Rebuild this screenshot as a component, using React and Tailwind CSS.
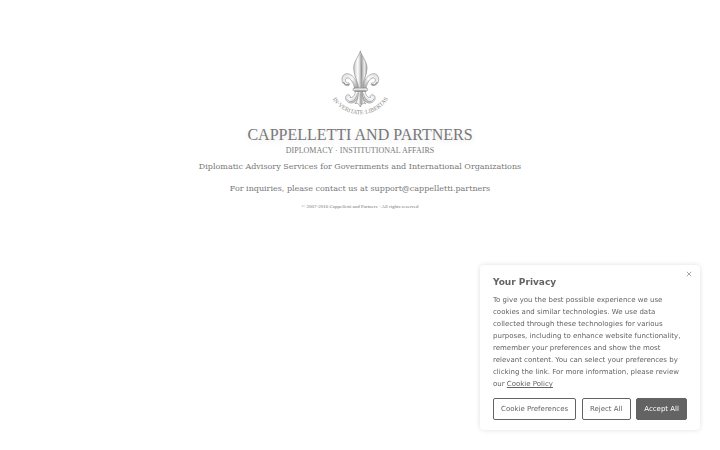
import { useState } from "react";

function Emblem() {
  return (
    <svg viewBox="0 0 210 225" className="w-[70px] h-[75px]" role="img" aria-label="In veritate libertas">
      <defs>
        <linearGradient id="petal" x1="0" x2="1" y1="0" y2="0">
          <stop offset="0" stopColor="#c8c8c8" />
          <stop offset="0.3" stopColor="#fcfcfc" />
          <stop offset="0.48" stopColor="#d8d8d8" />
          <stop offset="0.58" stopColor="#a2a2a2" />
          <stop offset="0.8" stopColor="#ececec" />
          <stop offset="1" stopColor="#a8a8a8" />
        </linearGradient>
        <linearGradient id="curl" x1="0" x2="1" y1="0" y2="1">
          <stop offset="0" stopColor="#dcdcdc" />
          <stop offset="0.5" stopColor="#fafafa" />
          <stop offset="1" stopColor="#999" />
        </linearGradient>
        <g id="side">
          {/* upper side petal with its hooked tip */}
          <path
            d="M99 130 C98 112 89 97 78 90 C65 81 51 88 51 103 C51 115 59 124 72 121 C76 116 72 112 66 114 C59 109 60 100 66 99 C77 98 86 113 89 130 Z"
            fill="url(#curl)"
          />
          <path d="M56 112 C60 120 66 121 71 118" fill="none" stroke="#777" strokeWidth="3" />
          {/* lower scroll */}
          <path
            d="M91 140 C91 150 84 158 76 158 C78 151 71 147 65 151 C58 157 62 171 76 174 C91 176 101 160 102 141 Z"
            fill="url(#curl)"
          />
          <path d="M65 162 C69 169 76 171 82 169 C90 166 95 155 97 146" fill="none" stroke="#888" />
        </g>
      </defs>
      <g stroke="#858585" strokeWidth="1.8" strokeLinejoin="round" strokeLinecap="round">
        <use href="#side" />
        <use href="#side" transform="translate(212 0) scale(-1 1)" />
        <path
          d="M106 19 C100 36 86 50 86 69 C86 91 98 108 102 130 H110 C114 108 126 91 126 69 C126 50 112 36 106 19 Z"
          fill="url(#petal)"
        />
        <path d="M106 29 V126" fill="none" stroke="#aaa" />
        <path d="M108 48 C113 64 112 87 108 108 Z" fill="#969696" stroke="none" />
        <path d="M100 140 C101 157 96 169 90 176 C98 173 102 177 106 186 C110 177 114 173 122 176 C116 169 111 157 112 140 Z" fill="url(#petal)" />
        <path d="M106 144 V176" fill="none" stroke="#999" />
        <rect x="84" y="129" width="44" height="9" rx="4" fill="#e6e6e6" />
        <path d="M89 138 H123" stroke="#747474" fill="none" />
      </g>
      <path id="motto-arc" d="M21 160 C60 223 150 225 191 159" fill="none" />
      <text className="font-['Liberation_Serif',serif] text-[18px]" fill="#888">
        <textPath href="#motto-arc" startOffset="50%" textAnchor="middle">
          IN·VERITATE·LIBERTAS
        </textPath>
      </text>
    </svg>
  );
}

function PrivacyNotice({ onClose }) {
  const outlined = "h-[22px] px-[7px] rounded-xs border border-[#636363] bg-white text-[#636363]";

  return (
    <section
      aria-labelledby="privacy-title"
      className="fixed right-5 bottom-5 w-[220px] rounded-sm bg-white px-[13px] pt-3 pb-2.5 font-['DejaVu_Sans',sans-serif] text-[7px] text-[#636363] shadow-[0_0_5px_rgba(0,0,0,0.13)]"
    >
      <button type="button" aria-label="Close" onClick={onClose} className="absolute top-1 right-1.5 p-0.5">
        <svg viewBox="0 0 8 8" className="size-1.5" stroke="#888" strokeWidth="1" fill="none">
          <path d="M1 1l6 6M7 1L1 7" />
        </svg>
      </button>
      <h2 id="privacy-title" className="text-[9px] leading-2.5 font-bold">Your Privacy</h2>
      <p className="mt-[7px] leading-3">
        To give you the best possible experience we use cookies and similar technologies. We use data collected
        through these technologies for various purposes, including to enhance website functionality, remember your
        preferences and show the most relevant content. You can select your preferences by clicking the link. For more
        information, please review our <a href="#cookie-policy" className="underline">Cookie Policy</a>
      </p>
      <div className="mt-2 flex justify-between whitespace-nowrap">
        <button type="button" className={outlined}>Cookie Preferences</button>
        <button type="button" onClick={onClose} className={outlined}>Reject All</button>
        <button type="button" onClick={onClose} className="h-[22px] px-[7px] rounded-xs border border-[#636363] bg-[#636363] text-white">
          Accept All
        </button>
      </div>
    </section>
  );
}

export default function App() {
  const [showNotice, setShowNotice] = useState(true);

  return (
    <div className="min-h-screen bg-white font-['DejaVu_Serif',serif] text-[#777]">
      <main className="flex flex-col items-center px-4 pt-[45px] text-center">
        <Emblem />
        <h1 className="mt-[5px] font-['Liberation_Serif',serif] text-[16px] leading-5 [text-shadow:0_2px_6px_rgba(0,0,0,0.12)]">
          CAPPELLETTI AND PARTNERS
        </h1>
        <p className="font-['Liberation_Serif',serif] text-[8px] leading-3">DIPLOMACY · INSTITUTIONAL AFFAIRS</p>
        <p className="mt-1 text-[8px] leading-3">
          Diplomatic Advisory Services for Governments and International Organizations
        </p>
        <p className="mt-2.5 text-[8px] leading-3">
          For inquiries, please contact us at support@cappelletti.partners
        </p>
        <p className="mt-2 font-['Liberation_Serif',serif] text-[5px] leading-2">
          © 2007-2016 Cappelletti and Partners · All rights reserved
        </p>
      </main>
      {showNotice && <PrivacyNotice onClose={() => setShowNotice(false)} />}
    </div>
  );
}
